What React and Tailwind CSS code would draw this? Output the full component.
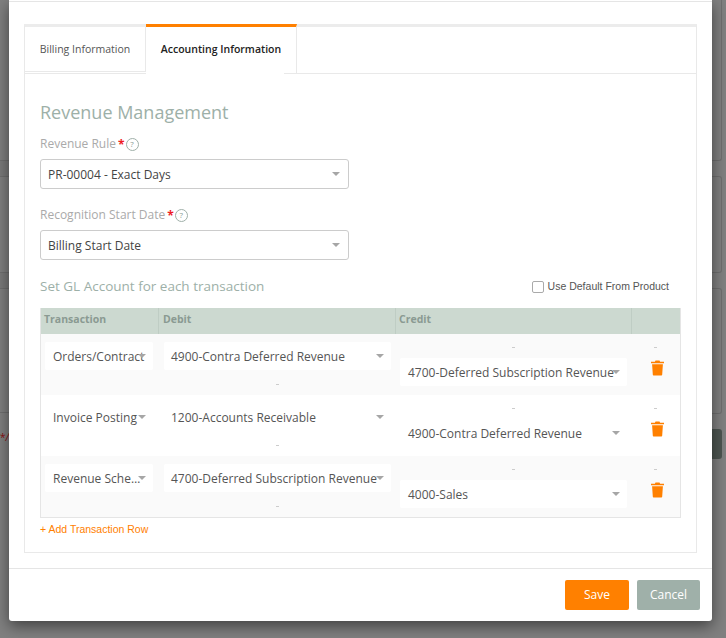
import React from "react";

const Caret = () => (
  <span className="block w-0 h-0 border-x-[4px] border-x-transparent border-t-[4px] border-t-[#a6a6a6] shrink-0" />
);

const Help = () => (
  <span className="ml-[1px] inline-flex items-center justify-center w-[13px] h-[13px] rounded-full border border-[#9fb0a9] text-[8px] leading-none text-[#8a9a92]">?</span>
);

const Label = ({ children, className = "" }) => (
  <div className={`flex items-center h-[16px] text-[12px] text-[#aaa] ${className}`}>
    <span>{children}</span>
    <span className="ml-[2px] text-[12px] leading-none text-[#ee1c25] font-bold h-[10px]">*</span>
    <Help />
  </div>
);

const Select = ({ children }) => (
  <div className="flex items-center justify-between w-[309px] h-[30px] pl-[7px] pr-[8px] bg-white border border-[#ccc] rounded-[3px] text-[12px] text-[#444]">
    <span className="pt-[1px]">{children}</span>
    <span className="-mt-[1px]"><Caret /></span>
  </div>
);

const Cell = ({ children, w, pl = "pl-[8px]" }) => (
  <div className={`flex items-center h-[28px] bg-white rounded-[2px] ${pl} pr-[7px] text-[12px] text-[#555] ${w}`}>
    <span className="flex-1 min-w-0 whitespace-nowrap pt-[1px]">{children}</span>
    <Caret />
  </div>
);

const Dash = () => <div className="h-[3px] w-[3px] border-t border-[#ccc] mx-auto" />;

const Trash = () => (
  <svg width="15" height="16" viewBox="0 0 14 16" className="mx-auto" fill="#ff8000">
    <path d="M5 0.5h4l.6 1.3H13.5v1.4H.5V1.8h3.9z" />
    <path d="M1.6 4.2h10.8l-.7 10.3c0 .6-.5 1-1 1H3.3c-.5 0-1-.4-1-1z" />
  </svg>
);

const rows = [
  { t: "Orders/Contract", d: "4900-Contra Deferred Revenue", c: "4700-Deferred Subscription Revenue", bg: "bg-[#fafafa]" },
  { t: "Invoice Posting", d: "1200-Accounts Receivable", c: "4900-Contra Deferred Revenue", bg: "bg-white" },
  { t: "Revenue Sche…", d: "4700-Deferred Subscription Revenue", c: "4000-Sales", bg: "bg-[#fafafa]" },
];

const cols = "grid grid-cols-[118px_237px_236px_48px]";

const LeftBand = () => <div className="h-[17px] border-y border-[#6f6f6f] bg-[#7a7a7a]" />;

export default function App() {
  return (
    <div className="relative w-[726px] h-[638px] overflow-hidden bg-[#808080] font-['Open_Sans',sans-serif]">
      <div className="flex justify-between h-full">
        <div className="flex flex-col w-[9px] pt-[160px]">
          <LeftBand />
          <div className="h-[95px]" />
          <LeftBand />
          <div className="h-[124px] border-b border-[#6f6f6f]" />
          <div className="flex justify-between mt-[19px] text-[10px] text-[#8a0f10] leading-none">
            <span>*</span>
            <span className="italic">/</span>
          </div>
        </div>
        <div className="flex flex-col w-[14px] gap-[15px]">
          <div className="h-[161px] border-r border-b border-[#6f6f6f] rounded-br-[3px] mr-[4px]" />
          <div className="h-[97px] border-r border-y border-[#6f6f6f] rounded-r-[3px] mr-[4px]" />
          <div className="h-[126px] border-r border-y border-[#6f6f6f] rounded-r-[3px] mr-[4px]" />
          <div className="h-[30px] bg-[#4d5551] rounded-r-[3px] mr-[4px]" />
        </div>
      </div>

      <div className="absolute left-[9px] top-0 w-[703px] h-[621px] bg-white rounded-b-[3px] shadow-[0_5px_15px_rgba(0,0,0,0.5)] flex flex-col">
        <div className="h-[2px] border-b border-[#e5e5e5]" />
        <div className="flex-1 pt-[22px] pl-[15px] pr-[15px]">
          <div className="h-[529px] w-[673px] border-x border-b border-[#e9e9e9] border-t-[3px] border-t-[#ececec]">
            <div className="flex h-[47px] border-b border-[#e9e9e9]">
              <div className="w-[121px] h-[45px] flex items-center justify-center pt-[1px] text-[10.5px] text-[#555] border-r border-b border-[#e9e9e9]">
                Billing Information
              </div>
              <div className="relative w-[151px] -mt-[3px] h-[49px] border-t-[3px] border-t-[#ff8000] border-r border-[#e9e9e9] flex items-center justify-center pb-[1px] text-[10.5px] font-semibold text-[#222]">
                Accounting Information
                <div className="absolute left-0 -bottom-[1px] w-[138px] h-[2px] bg-white" />
              </div>
            </div>

            <div className="pl-[15px] pr-[15px] pt-[26px]">
              <div className="text-[18px] leading-[24px] text-[#9db0a8]">Revenue Management</div>
              <Label className="mt-[12px]">Revenue Rule</Label>
              <div className="mt-[7px]"><Select>PR-00004 - Exact Days</Select></div>
              <Label className="mt-[18px]">Recognition Start Date</Label>
              <div className="mt-[7px]"><Select>Billing Start Date</Select></div>

              <div className="flex items-center justify-between mt-[17px] h-[18px]">
                <span className="text-[13.5px] text-[#9db0a8]">Set GL Account for each transaction</span>
                <label className="flex items-center gap-[4px] mr-[12px] pt-[1px] text-[10.5px] text-[#555] font-['Liberation_Sans',sans-serif]">
                  <span className="w-[12px] h-[12px] border border-[#aaa] rounded-[2px] bg-white" />
                  Use Default From Product
                </label>
              </div>

              <div className="mt-[13px] w-[641px] border-x border-b border-[#e5e5e5]">
                <div className={`${cols} h-[26px] bg-[#ccd9d0] text-[10.5px] font-bold text-[#8a9a92]`}>
                  <div className="flex items-center pl-[3px] pb-[2px] border-r border-[#bfcdc4]">Transaction</div>
                  <div className="flex items-center pl-[4px] pb-[2px] border-r border-[#bfcdc4]">Debit</div>
                  <div className="flex items-center pl-[3px] pb-[2px] border-r border-[#bfcdc4]">Credit</div>
                  <div />
                </div>
                {rows.map((r) => (
                  <div key={r.t} className={`${cols} h-[61px] ${r.bg}`}>
                    <div className="pl-[4px] pt-[8px]"><Cell w="w-[108px]">{r.t}</Cell></div>
                    <div className="pl-[5px] pt-[8px]">
                      <Cell w="w-[227px]" pl="pl-[7px]">{r.d}</Cell>
                      <div className="mt-[14px] w-[227px]"><Dash /></div>
                    </div>
                    <div className="pl-[4px] pt-[13px]">
                      <div className="w-[227px]"><Dash /></div>
                      <div className="mt-[8px]"><Cell w="w-[227px]">{r.c}</Cell></div>
                    </div>
                    <div className="pt-[13px] pr-[2px]">
                      <Dash />
                      <div className="mt-[10px] pl-[4px]"><Trash /></div>
                    </div>
                  </div>
                ))}
              </div>

              <div className="mt-[4px] text-[10.5px] leading-[14px] text-[#ff8000] font-['Liberation_Sans',sans-serif]">+ Add Transaction Row</div>
            </div>
          </div>
        </div>
        <div className="h-[53px] border-t border-[#e5e5e5] flex justify-end gap-[8px] pt-[11px] pr-[12px]">
          <button className="w-[64px] h-[30px] bg-[#ff8000] text-white text-[12px] rounded-[2px]">Save</button>
          <button className="w-[63px] h-[30px] bg-[#9fb0a9] text-white text-[12px] rounded-[2px]">Cancel</button>
        </div>
      </div>
    </div>
  );
}
